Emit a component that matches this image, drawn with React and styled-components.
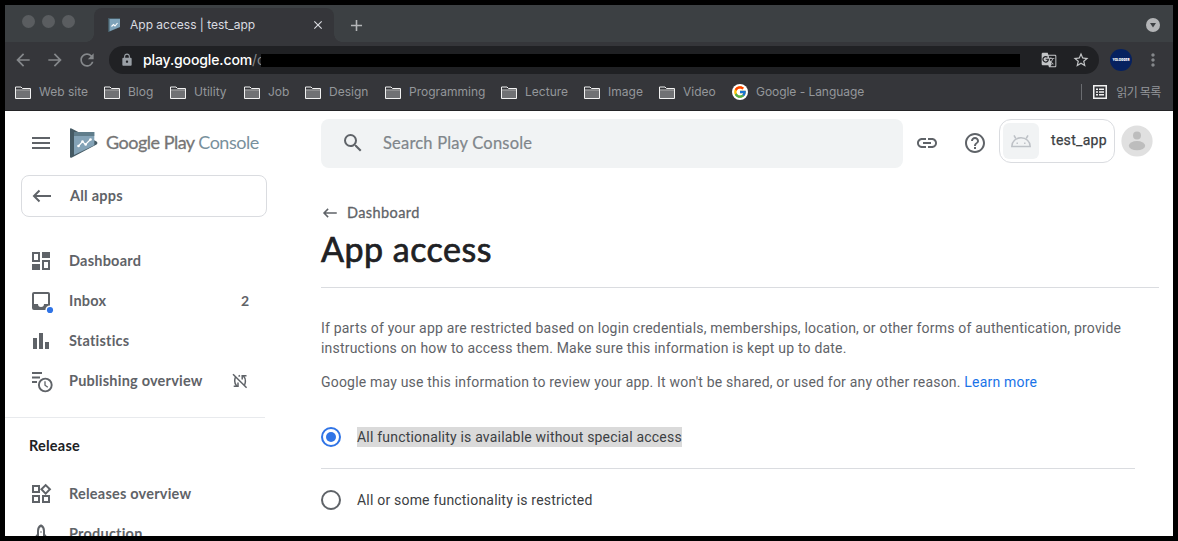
import React from "react";
import styled, { createGlobalStyle, css } from "styled-components";
import {
  MdMenu, MdArrowBack, MdArrowForward, MdRefresh, MdLock, MdSearch, MdLink, MdHelpOutline,
  MdBarChart, MdOutlineWidgets, MdStarBorder, MdMoreVert, MdGTranslate, MdClose, MdAdd,
} from "react-icons/md";
import { FcGoogle } from "react-icons/fc";

const ui = `Inter, "Liberation Sans", sans-serif`;
const brand = `"Lato", "Open Sans", sans-serif`;
const body = `Roboto, "Liberation Sans", sans-serif`;

const Global = createGlobalStyle`
  * { box-sizing: border-box; }
  body { margin: 0; background: #000; font-variant-ligatures: none; }
  svg { display: block; flex: none; }
`;

const Frame = styled.div`
  width: 1178px;
  height: 541px;
  border: 5px solid #000;
  background: #fff;
  overflow: hidden;
  display: flex;
  flex-direction: column;
  white-space: nowrap;
`;

const TabStrip = styled.div`
  height: 37px;
  flex: none;
  background: #3c4043;
  display: flex;
  align-items: flex-end;
`;
const Lights = styled.div`
  display: flex;
  gap: 7px;
  padding: 0 0 14px 17px;
  width: 89px;
`;
const Light = styled.i`
  width: 13px;
  height: 13px;
  border-radius: 50%;
  background: #5a5d60;
`;
const Tab = styled.div`
  position: relative;
  width: 240px;
  height: 34px;
  border-radius: 8px 8px 0 0;
  background: #35363a;
  display: flex;
  align-items: center;
  padding: 0 9px 0 14px;
  color: #dadce0;
  &::before, &::after {
    content: "";
    position: absolute;
    bottom: 0;
    width: 8px;
    height: 8px;
  }
  &::before { left: -8px; background: radial-gradient(circle at 0 0, transparent 7.5px, #35363a 8px); }
  &::after { right: -8px; background: radial-gradient(circle at 100% 0, transparent 7.5px, #35363a 8px); }
`;
const TabTitle = styled.span`
  flex: 1;
  margin-left: 9px;
  font: 400 12px/16px ${ui};
`;
const NewTab = styled.div`
  margin-left: 13px;
  height: 34px;
  display: flex;
  align-items: center;
  color: #b4b6b8;
  flex: 1;
`;
const TabMenu = styled.div`
  height: 34px;
  display: flex;
  align-items: center;
  padding-right: 13px;
`;

const Toolbar = styled.div`
  height: 36px;
  flex: none;
  background: #35363a;
  display: flex;
  align-items: center;
  color: #85888b;
`;
const NavButtons = styled.div`
  width: 104px;
  padding-left: 8px;
  display: flex;
  gap: 12px;
`;
const Omnibox = styled.div`
  width: 990px;
  height: 28px;
  border-radius: 14px;
  background: #202124;
  display: flex;
  align-items: center;
  padding: 0 9px 0 11px;
  color: #c3c5c7;
`;
const Url = styled.div`
  margin-left: 9px;
  width: 118px;
  font: 400 14px/20px ${ui};
  letter-spacing: -0.12px;
  color: #85888b;
  b { font-weight: 500; color: #fff; }
`;
const Redaction = styled.div`
  position: relative;
  width: 759px;
  height: 13px;
  background: #000;
`;
const OmniIcons = styled.div`
  margin-left: auto;
  display: flex;
  align-items: center;
  gap: 15px;
`;
const Profile = styled.div`
  margin: 0 11px 0 11px;
  width: 22px;
  height: 22px;
  border-radius: 50%;
  background: #06215f;
  display: flex;
  align-items: center;
  justify-content: center;
`;

const Bookmarks = styled.div`
  height: 33px;
  flex: none;
  background: #35363a;
  border-bottom: 1px solid #242427;
  display: flex;
  align-items: center;
  padding: 0 12px 4px 10px;
  color: #94979a;
  font: 400 12px/16px ${ui};
`;
const Bookmark = styled.div`
  width: ${(p) => p.$w}px;
  display: flex;
  align-items: center;
  gap: 8px;
  letter-spacing: ${(p) => p.$ls ?? 0}px;
`;
const GoogleBadge = styled.i`
  width: 16px;
  height: 16px;
  border-radius: 50%;
  background: #fff;
  display: flex;
  align-items: center;
  justify-content: center;
`;
const ReadingList = styled.div`
  margin-left: auto;
  height: 16px;
  border-left: 1px solid #6a6c70;
  padding-left: 11px;
  display: flex;
  align-items: center;
  gap: 9px;
  font: 400 12px/16px "Noto Sans CJK KR", sans-serif;
  letter-spacing: -0.4px;
`;

const Page = styled.div`
  flex: 1;
  min-height: 0;
  display: flex;
  background: #fff;
  overflow: hidden;
`;
const Sidebar = styled.aside`
  width: 316px;
  flex: none;
  color: #5f6368;
`;
const Brand = styled.div`
  height: 64px;
  display: flex;
  align-items: center;
  padding-left: 24px;
  gap: 17px;
`;
const BrandLink = styled.div`
  display: flex;
  align-items: center;
  gap: 8px;
`;
const BrandName = styled.div`
  padding-bottom: 2px;
  font: 400 18px/24px ${brand};
  letter-spacing: -0.5px;
  color: #757575;
  -webkit-text-stroke: 0.3px currentColor;
  span { color: #78909c; -webkit-text-stroke: 0; }
`;
const AllApps = styled.div`
  margin-left: 16px;
  width: 246px;
  height: 42px;
  border: 1px solid #dadce0;
  border-radius: 8px;
  display: flex;
  align-items: center;
  padding-left: 8px;
  gap: 16px;
`;
const NavText = styled.span`
  font: 700 14.5px/20px ${brand};
  letter-spacing: 0.22px;
`;
const NavList = styled.nav`
  margin-top: ${(p) => p.$top}px;
`;
const NavItem = styled.div`
  height: 40px;
  display: flex;
  align-items: center;
  padding-left: 24px;
  gap: 16px;
`;
const Trailing = styled.span`
  margin-left: auto;
  margin-right: ${(p) => p.$right}px;
  font: 700 14px/20px ${brand};
`;
const Rule = styled.div`
  height: 1px;
  width: ${(p) => p.$w}px;
  margin-top: ${(p) => p.$top || 0}px;
  background: ${(p) => p.$c || "#dadce0"};
`;
const SectionTitle = styled.div`
  padding: 18px 0 0 24px;
  font: 700 14.5px/20px ${brand};
  letter-spacing: 0.22px;
  color: #202124;
`;

const Main = styled.main`
  flex: 1;
  padding-top: 8px;
`;
const TopBar = styled.div`
  display: flex;
  height: 49px;
`;
const SearchBox = styled.div`
  width: 582px;
  height: 49px;
  border-radius: 8px;
  background: #f1f3f4;
  display: flex;
  align-items: center;
  padding: 0 0 1px 20px;
  color: #5f6368;
  gap: 18px;
  span {
    font: 400 16.5px/24px ${brand};
    letter-spacing: 0.2px;
    color: #80868b;
    -webkit-text-stroke: 0.2px currentColor;
  }
`;
const TopIcons = styled.div`
  width: 96px;
  padding: 0 0 1px 12px;
  display: flex;
  align-items: center;
  gap: 24px;
  color: #5f6368;
`;
const AppChip = styled.div`
  width: 116px;
  height: 44px;
  border: 1px solid #dadce0;
  border-radius: 12px;
  display: flex;
  align-items: center;
  padding-left: 3px;
  gap: 12px;
  color: #3c4043;
  font: 400 14px/20px ${body};
  letter-spacing: 0.3px;
  -webkit-text-stroke: 0.25px currentColor;
  span { padding-bottom: 2px; }
`;
const AppIcon = styled.i`
  width: 36px;
  height: 36px;
  border-radius: 6px;
  background: #f1f3f4;
  display: flex;
  align-items: center;
  justify-content: center;
`;
const AvatarBox = styled.div`
  margin: 6px 0 0 6px;
`;
const Crumb = styled.div`
  margin-top: 35px;
  display: flex;
  align-items: center;
  gap: 8px;
  color: #5f6368;
  font: 400 14.5px/20px ${brand};
  letter-spacing: 0.4px;
  -webkit-text-stroke: 0.3px currentColor;
`;
const Title = styled.h1`
  margin: 4px 0 16px;
  font: 400 34px/44px ${brand};
  letter-spacing: 0.5px;
  color: #202124;
  -webkit-text-stroke: 0.7px currentColor;
`;
const Para = styled.p`
  margin: ${(p) => p.$top}px 0 0;
  font: 400 14px/20px ${body};
  letter-spacing: 0.195px;
  color: #5f6368;
  a { color: #1a73e8; }
`;
const Option = styled.div`
  height: 62px;
  margin-top: ${(p) => p.$top}px;
  display: flex;
  align-items: center;
  gap: 16px;
  font: 400 14px/20px ${body};
  letter-spacing: 0.2px;
  color: #3c4043;
`;
const Radio = styled.i`
  width: 20px;
  height: 20px;
  border: 2px solid #5f6368;
  border-radius: 50%;
  display: flex;
  align-items: center;
  justify-content: center;
  ${(p) => p.$on && css`
    border-color: #3074e6;
    &::after {
      content: "";
      width: 10px;
      height: 10px;
      border-radius: 50%;
      background: #3074e6;
    }
  `}
`;
const Selected = styled.span`
  background: #dadada;
`;

const Folder = () => (
  <svg width="16" height="13" viewBox="0 0 16 13">
    <path d="M.5 12.500V1h5.500l1.500 1.500H15.500V12.500z" fill="#35363a" stroke="#f1f1f1" />
    <path d="M1 4.500h14V12H1z" fill="#707174" />
    <path d="M1 4h14" stroke="#c8c8c8" />
  </svg>
);

const ListIcon = () => (
  <svg width="14" height="14" viewBox="0 0 14 14">
    <rect x=".75" y=".75" width="12.500" height="12.500" fill="none" stroke="#f1f1f1" strokeWidth="1.500" />
    <path d="M3 4.200h2M6 4.200h5M3 7h2M6 7h5M3 9.800h2M6 9.800h5" stroke="#f1f1f1" strokeWidth="1.600" />
  </svg>
);

const PlayLogo = () => (
  <svg width="28" height="30" viewBox="0 0 28 30">
    <path d="M0 1.200Q0-.4 1.500.4L26.600 13.600Q28.200 15 26.600 16.400L1.500 29.700Q0 30.300 0 28.800z" fill="#455a64" />
    <path d="M4 4h20.300v13.200L4 27z" fill="#84a3b7" />
    <path d="M4 4h20.300v4H4z" fill="#607d8b" />
    <path d="M8.500 18l4-4.500 3 3 5-5" fill="none" stroke="#fff" strokeWidth="1.200" />
    <g fill="#fff">
      <circle cx="8.500" cy="18" r="1.300" /><circle cx="12.500" cy="13.500" r="1.300" />
      <circle cx="15.700" cy="16.500" r="1.300" /><circle cx="20.500" cy="11.500" r="1.300" />
    </g>
  </svg>
);

const TabFavicon = () => (
  <svg width="13" height="14" viewBox="0 0 13 14">
    <path d="M0 0h12v9L1 14H0z" fill="#455a64" />
    <path d="M1.500 1h10.500v8L1.500 13.200z" fill="#7fa3ba" />
    <path d="M3.500 8.500l2-2 1.500 1.500L9.500 5" fill="none" stroke="#fff" strokeWidth="1.100" />
  </svg>
);

const LongArrow = ({ size = 24, sw = 2 }) => (
  <svg width={size} height={size} viewBox="0 0 24 24" fill="none" stroke="currentColor" strokeWidth={sw}>
    <path d="M21 12H4.500M9.500 6.500L4 12l5.500 5.500" />
  </svg>
);

const DashboardIcon = () => (
  <svg width="24" height="24" viewBox="0 0 24 24" fill="currentColor" fillRule="evenodd">
    <path d="M3 3h8v10H3zm2 2v6h4V5zM13 3h8v6h-8zM3 15h8v6H3zM13 11h8v10h-8zm2 2v6h4v-6z" />
  </svg>
);

const InboxIcon = () => (
  <svg width="24" height="24" viewBox="0 0 24 24" fillRule="evenodd" overflow="visible">
    <path fill="currentColor" d="M5 3h14a2 2 0 0 1 2 2v14a2 2 0 0 1-2 2H5a2 2 0 0 1-2-2V5a2 2 0 0 1 2-2zm0 2v10h4a3 3 0 0 0 6 0h4V5z" />
    <circle cx="21" cy="21" r="4.600" fill="#fff" />
    <circle cx="21" cy="21" r="3.100" fill="#3074e6" />
  </svg>
);

const PublishingIcon = () => (
  <svg width="24" height="24" viewBox="0 0 24 24" fill="none" stroke="currentColor" overflow="visible">
    <path d="M3 4h10M3 8.500h8M3 13h5" strokeWidth="2" />
    <circle cx="16.300" cy="16" r="6.400" strokeWidth="1.900" />
    <path d="M16 12.200v4l2.800 2" strokeWidth="1.300" />
  </svg>
);

const UnsyncedIcon = () => (
  <svg width="16" height="16" viewBox="0 0 16 16" fill="none" stroke="currentColor" strokeWidth="1.500">
    <path d="M1 1.200l13.600 13.600" />
    <path d="M3.500 4Q2.700 6 2.700 8q0 3 2 5M1.700 13.300h4.300V9.500" />
    <path d="M12.500 12q.9-1.500.9-4 0-3-2-5M14.500 2.700h-4.300v3.800M8 2.500l-1.500.8" />
  </svg>
);

const RocketIcon = () => (
  <svg width="24" height="24" viewBox="0 0 24 24" fill="none" stroke="currentColor" strokeWidth="2">
    <path d="M9 18V9q0-4 3-5.500Q15 5 15 9v9z" />
    <path d="M9 12.500L6 16v5l3-2M15 12.500l3 3.500v5l-3-2" />
    <circle cx="12" cy="10" r=".8" fill="currentColor" stroke="none" />
  </svg>
);

const AndroidIcon = () => (
  <svg width="22" height="14" viewBox="0 0 22 14" fill="none" stroke="#bdc1c6" strokeWidth="1.500">
    <path d="M1.800 12.400a9.200 8.600 0 0 1 18.400 0z" />
    <path d="M5.800 4.500L4 1.400M16.200 4.500L18 1.400" />
    <path d="M6.500 9.200h1.400M14.100 9.200h1.400" />
  </svg>
);

const Avatar = () => (
  <svg width="32" height="32" viewBox="0 0 32 32">
    <circle cx="16" cy="16" r="15.600" fill="#e0e0e0" />
    <circle cx="16" cy="10.500" r="4" fill="#bdbdbd" />
    <ellipse cx="16" cy="20.700" rx="8.200" ry="4.600" fill="#bdbdbd" />
  </svg>
);

const TabMenuIcon = () => (
  <svg width="14" height="14" viewBox="0 0 14 14">
    <circle cx="7" cy="7" r="7" fill="#b3b5b7" />
    <path d="M4 5h6L7 9.400z" fill="#3c4043" />
  </svg>
);

const ProfileMark = () => (
  <svg width="20" height="8" viewBox="0 0 20 8">
    <text x="10" y="5.300" textAnchor="middle" textLength="17" lengthAdjust="spacingAndGlyphs"
      fontFamily="Inter, sans-serif" fontWeight="900" fontSize="4" fill="#fff">YOLOGGER</text>
  </svg>
);

const folders = [
  ["Web site", 89], ["Blog", 66], ["Utility", 74], ["Job", 61], ["Design", 80],
  ["Programming", 116], ["Lecture", 83], ["Image", 75], ["Video", 73],
];

export default function App() {
  return (
    <Frame>
      <Global />
      <TabStrip>
        <Lights><Light /><Light /><Light /></Lights>
        <Tab>
          <TabFavicon />
          <TabTitle>App access | test_app</TabTitle>
          <MdClose size={14} />
        </Tab>
        <NewTab><MdAdd size={19} /></NewTab>
        <TabMenu><TabMenuIcon /></TabMenu>
      </TabStrip>
      <Toolbar>
        <NavButtons><MdArrowBack size={20} /><MdArrowForward size={20} /><MdRefresh size={20} /></NavButtons>
        <Omnibox>
          <MdLock size={14} color="#9aa0a6" />
          <Url><b>play.google.com</b>/c</Url>
          <Redaction />
          <OmniIcons><MdGTranslate size={16} /><MdStarBorder size={18} /></OmniIcons>
        </Omnibox>
        <Profile><ProfileMark /></Profile>
        <MdMoreVert size={20} />
      </Toolbar>
      <Bookmarks>
        {folders.map(([name, w]) => (
          <Bookmark key={name} $w={w} $ls={0.02}><Folder />{name}</Bookmark>
        ))}
        <Bookmark $w={140} $ls={-0.05}><GoogleBadge><FcGoogle size={14} /></GoogleBadge>Google - Language</Bookmark>
        <ReadingList><ListIcon />읽기 목록</ReadingList>
      </Bookmarks>

      <Page>
        <Sidebar>
          <Brand>
            <MdMenu size={24} />
            <BrandLink>
              <PlayLogo />
              <BrandName>Google Play <span>Console</span></BrandName>
            </BrandLink>
          </Brand>
          <AllApps><LongArrow /><NavText>All apps</NavText></AllApps>
          <NavList $top={24}>
            <NavItem><DashboardIcon /><NavText>Dashboard</NavText></NavItem>
            <NavItem><InboxIcon /><NavText>Inbox</NavText><Trailing $right={72}>2</Trailing></NavItem>
            <NavItem><MdBarChart size={24} /><NavText>Statistics</NavText></NavItem>
            <NavItem><PublishingIcon /><NavText>Publishing overview</NavText><Trailing $right={73}><UnsyncedIcon /></Trailing></NavItem>
          </NavList>
          <Rule $top={16} $w={260} $c="#e8eaed" />
          <SectionTitle>Release</SectionTitle>
          <NavList $top={18}>
            <NavItem><MdOutlineWidgets size={24} /><NavText>Releases overview</NavText></NavItem>
            <NavItem><RocketIcon /><NavText>Production</NavText></NavItem>
          </NavList>
        </Sidebar>

        <Main>
          <TopBar>
            <SearchBox><MdSearch size={24} /><span>Search Play Console</span></SearchBox>
            <TopIcons><MdLink size={24} /><MdHelpOutline size={24} /></TopIcons>
            <AppChip><AppIcon><AndroidIcon /></AppIcon><span>test_app</span></AppChip>
            <AvatarBox><Avatar /></AvatarBox>
          </TopBar>
          <Crumb><LongArrow size={18} />Dashboard</Crumb>
          <Title>App access</Title>
          <Rule $w={838} />
          <Para $top={30}>
            If parts of your app are restricted based on login credentials, memberships, location, or other forms of authentication, provide<br />
            instructions on how to access them. Make sure this information is kept up to date.
          </Para>
          <Para $top={14}>
            Google may use this information to review your app. It won't be shared, or used for any other reason. <a>Learn more</a>
          </Para>
          <Option $top={14}><Radio $on /><Selected>All functionality is available without special access</Selected></Option>
          <Rule $w={814} />
          <Option $top={0}><Radio />All or some functionality is restricted</Option>
        </Main>
      </Page>
    </Frame>
  );
}
